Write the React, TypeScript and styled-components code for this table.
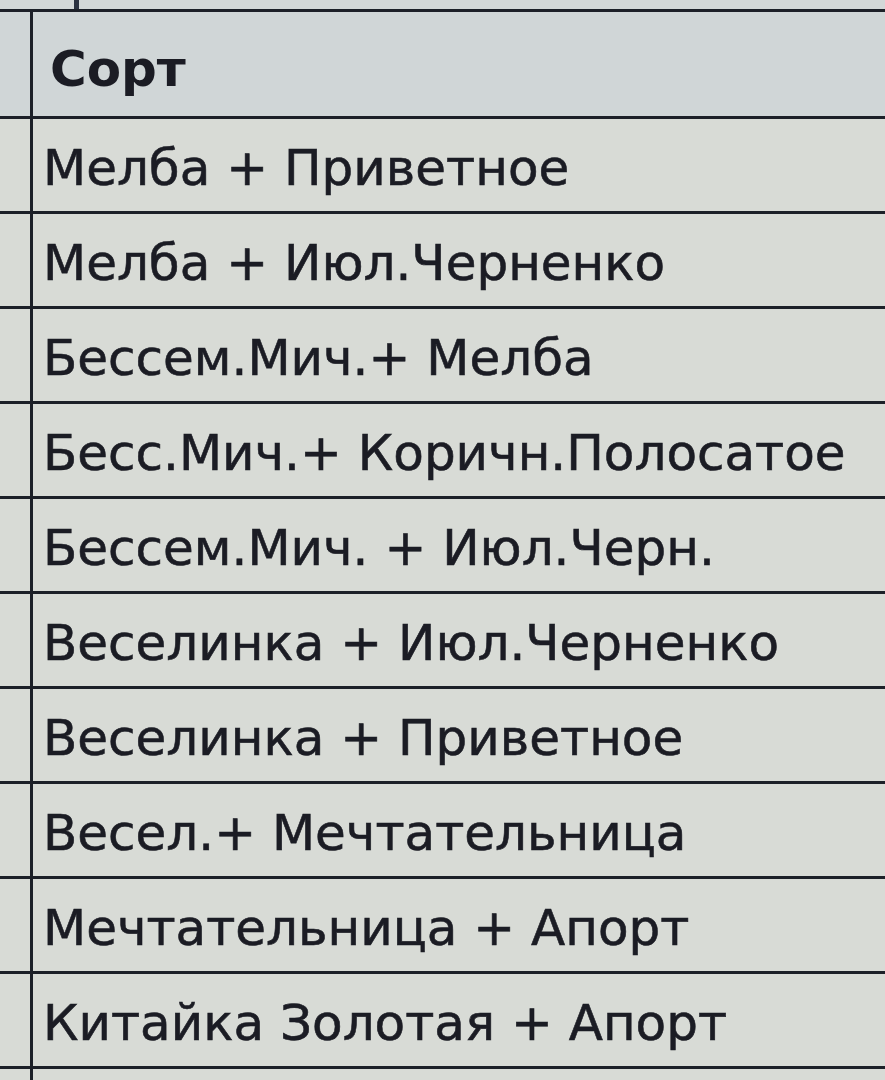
import React from "react";
import styled, { createGlobalStyle } from "styled-components";

const GlobalStyle = createGlobalStyle`
  html, body {
    margin: 0;
    padding: 0;
    background: #d6dad7;
  }
  body {
    font-family: "DejaVu Sans", "Liberation Sans", Arial, sans-serif;
    color: #1b1c24;
  }
`;

const Sheet = styled.div`
  width: 885px;
  height: 1080px;
  overflow: hidden;
  background: #d7dbd8;
  display: flex;
  flex-direction: column;
`;

const TopStrip = styled.div`
  height: 11px;
  border-bottom: 3px solid #1c2028;
  display: grid;
  grid-template-columns: 74px 1fr;
  background: #d3d8d8;
`;

const Mark = styled.span`
  width: 5px;
  height: 9px;
  background: #2a3140;
  grid-column: 2;
`;

const Row = styled.div<{ $height: number; $header?: boolean }>`
  height: ${(p) => p.$height}px;
  flex: none;
  display: grid;
  grid-template-columns: 33px 1fr;
  border-bottom: 3px solid #1c2028;
  background: ${(p) => (p.$header ? "#d0d6d7" : "#d8dbd6")};
`;

const Gutter = styled.div`
  border-right: 3px solid #1c2028;
`;

const Cell = styled.div<{ $header?: boolean }>`
  display: flex;
  align-items: center;
  padding-left: ${(p) => (p.$header ? 17 : 10)}px;
  padding-top: ${(p) => (p.$header ? 10 : 6)}px;
  font-size: ${(p) => (p.$header ? 50 : 50)}px;
  font-weight: ${(p) => (p.$header ? 700 : 400)};
  -webkit-text-stroke: ${(p) => (p.$header ? 0 : 0.6)}px #1b1c24;
  white-space: nowrap;
`;

const sorts = [
  "Мелба + Приветное",
  "Мелба + Июл.Черненко",
  "Бессем.Мич.+ Мелба",
  "Бесс.Мич.+ Коричн.Полосатое",
  "Бессем.Мич. + Июл.Черн.",
  "Веселинка + Июл.Черненко",
  "Веселинка + Приветное",
  "Весел.+ Мечтательница",
  "Мечтательница + Апорт",
  "Китайка Золотая + Апорт",
];

export default function App() {
  return (
    <>
      <GlobalStyle />
      <Sheet>
        <TopStrip>
          <Mark />
        </TopStrip>
        <Row $height={104} $header>
          <Gutter />
          <Cell $header>Сорт</Cell>
        </Row>
        {sorts.map((s) => (
          <Row key={s} $height={92}>
            <Gutter />
            <Cell>{s}</Cell>
          </Row>
        ))}
        <Row $height={40}>
          <Gutter />
          <Cell />
        </Row>
      </Sheet>
    </>
  );
}
